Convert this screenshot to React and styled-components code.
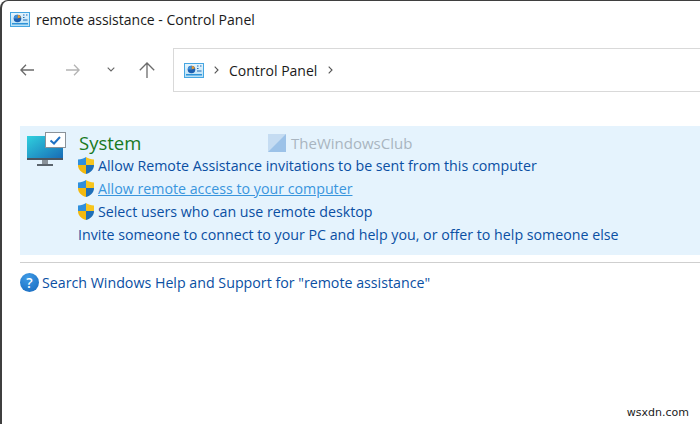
import React from 'react';
import styled, { createGlobalStyle } from 'styled-components';

const GlobalStyle = createGlobalStyle`
	html, body {
		margin: 0;
		padding: 0;
		background: #fff;
	}
	body {
		font-family: 'Open Sans', 'Noto Sans', sans-serif;
	}
`;

const CpIcon = ({ id }) => (
	<svg width="20" height="15" viewBox="0 0 20 15">
		<defs>
			<linearGradient id={id} x1="0" y1="0" x2="0" y2="1">
				<stop offset="0" stopColor="#e6f5fd" />
				<stop offset="1" stopColor="#b6dff6" />
			</linearGradient>
		</defs>
		<rect x="0.5" y="0.5" width="19" height="14" fill={`url(#${id})`} stroke="#45a6e2" />
		<circle cx="7.5" cy="6.5" r="3.8" fill="#1d5fb0" />
		<path d="M7.5 6.5V2.7a3.8 3.8 0 0 1 3.6 2.6z" fill="#e89a32" />
		<path d="M3.8 6.5a3.8 3.8 0 0 1 3.7-3.8v3.8z" fill="#3f8fd8" />
		<path d="M13 3h1.5M16 3h1.5M13 5.5h1.5M13 8h4.5" stroke="#1f69b5" strokeWidth="1.2" />
		<rect x="2" y="11" width="16" height="1.5" fill="#2f93d8" />
	</svg>
);

const Shield = () => (
	<ShieldSvg width="18" height="19" viewBox="0 0 18 19">
		<path d="M9 1C7 2.6 4 3.4 1 3.4V9h8z" fill="#2f8fdc" />
		<path d="M9 1c2 1.6 5 2.4 8 2.4V9H9z" fill="#f7c51e" />
		<path d="M1 9c0 4.6 3.4 7.6 8 9V9z" fill="#f2b90f" />
		<path d="M17 9c0 4.6-3.4 7.6-8 9V9z" fill="#1f6fb8" />
	</ShieldSvg>
);

const ArrowLeft = ({ color }) => (
	<svg width="14" height="12" viewBox="0 0 14 12" fill="none" stroke={color} strokeWidth="1.3">
		<path d="M14 6H1M6 .7L.9 6 6 11.3" />
	</svg>
);

const ArrowRight = ({ color }) => (
	<svg width="14" height="12" viewBox="0 0 14 12" fill="none" stroke={color} strokeWidth="1.3">
		<path d="M0 6h13M8 .7L13.1 6 8 11.3" />
	</svg>
);

const ArrowUp = ({ color }) => (
	<svg width="16" height="16" viewBox="0 0 16 16" fill="none" stroke={color} strokeWidth="1.3">
		<path d="M8 16V1M.8 8.2L8 1l7.2 7.2" />
	</svg>
);

const Chevron = () => (
	<svg width="5" height="8" viewBox="0 0 5 8" fill="none" stroke="#555" strokeWidth="1.1">
		<path d="M.7.7L4 4 .7 7.3" />
	</svg>
);

const App = () => {
	return (
		<>
			<GlobalStyle />
			<Window>
				<TitleBar>
					<CpIcon id="cpTitle" />
					<TitleText>remote assistance - Control Panel</TitleText>
				</TitleBar>
				<NavRow>
					<NavButtons>
						<NavSlot $width={46}>
							<ArrowLeft color="#6b6b6b" />
						</NavSlot>
						<NavSlot $width={41}>
							<ArrowRight color="#b4b4b4" />
						</NavSlot>
						<NavSlot $width={32}>
							<svg width="8" height="5" viewBox="0 0 8 5" fill="none" stroke="#666" strokeWidth="1.1">
								<path d="M.7.7L4 4 7.3.7" />
							</svg>
						</NavSlot>
						<ArrowUp color="#6b6b6b" />
					</NavButtons>
					<AddressBar>
						<CpIcon id="cpAddress" />
						<Chevron />
						<Crumb>Control Panel</Crumb>
						<Chevron />
					</AddressBar>
				</NavRow>
				<Results>
					<ResultPanel>
						<MonitorIcon width="40" height="36" viewBox="0 0 40 36">
							<defs>
								<linearGradient id="screen" x1="0" y1="0" x2="1" y2="1">
									<stop offset="0" stopColor="#2fd0de" />
									<stop offset="1" stopColor="#1767b4" />
								</linearGradient>
							</defs>
							<rect x="0" y="4" width="36" height="24" fill="url(#screen)" />
							<rect x="0" y="26" width="36" height="2" fill="#4b5560" />
							<rect x="15" y="28" width="6" height="4" fill="#8a9299" />
							<rect x="10" y="32" width="16" height="2" fill="#5b646c" />
							<rect x="18.5" y="0.5" width="20" height="15" fill="#fff" stroke="#8a9299" />
							<path d="M23.5 8.5l3.5 3 6-6.5" fill="none" stroke="#1f72c4" strokeWidth="2" />
						</MonitorIcon>
						<ResultBody>
							<ResultTitle>System</ResultTitle>
							<TaskRow>
								<Shield />
								<TaskLink>Allow Remote Assistance invitations to be sent from this computer</TaskLink>
							</TaskRow>
							<TaskRow>
								<Shield />
								<TaskLink $active>Allow remote access to your computer</TaskLink>
							</TaskRow>
							<TaskRow>
								<Shield />
								<TaskLink>Select users who can use remote desktop</TaskLink>
							</TaskRow>
							<TaskRow>
								<TaskLink>Invite someone to connect to your PC and help you, or offer to help someone else</TaskLink>
							</TaskRow>
						</ResultBody>
						<Watermark>
							<svg width="18" height="18" viewBox="0 0 18 18">
								<rect width="18" height="18" fill="#c5dcf2" />
								<path d="M0 18L18 0v18z" fill="#9cc2e8" />
							</svg>
							<WatermarkText>TheWindowsClub</WatermarkText>
						</Watermark>
					</ResultPanel>
					<Divider />
					<HelpRow>
						<HelpIcon>?</HelpIcon>
						<TaskLink>Search Windows Help and Support for "remote assistance"</TaskLink>
					</HelpRow>
				</Results>
				<Credit>wsxdn.com</Credit>
			</Window>
		</>
	);
};

export default App;

const Window = styled.div`
	position: relative;
	box-sizing: border-box;
	width: 700px;
	height: 424px;
	overflow: hidden;
	background: #fff;
	border-left: 2px solid #3f3f3f;
	border-top: 1px solid #3f3f3f;
	border-top-left-radius: 8px;
`;
const TitleBar = styled.div`
	display: flex;
	align-items: center;
	gap: 6px;
	height: 36px;
	padding-left: 8px;
`;
const TitleText = styled.div`
	font-size: 14px;
	color: #1a1a1a;
`;
const NavRow = styled.div`
	display: flex;
	align-items: center;
	height: 44px;
	margin-top: 11px;
`;
const NavButtons = styled.div`
	display: flex;
	align-items: center;
	width: 171px;
	padding-left: 18px;
	box-sizing: border-box;
	margin-top: -1px;
`;
const NavSlot = styled.div`
	display: flex;
	align-items: center;
	flex: none;
	width: ${({ $width }) => $width}px;
`;
const AddressBar = styled.div`
	display: flex;
	align-items: center;
	flex: 1;
	height: 44px;
	box-sizing: border-box;
	padding-left: 10px;
	gap: 10px;
	border: 1px solid #d9d9d9;
	border-right: none;
`;
const Crumb = styled.div`
	font-size: 14px;
	color: #1a1a1a;
	margin-right: 1px;
`;
const Results = styled.div`
	padding: 34px 0 0 18px;
`;
const ResultPanel = styled.div`
	position: relative;
	display: flex;
	height: 129px;
	padding: 6px 0 0 7px;
	box-sizing: border-box;
	background: #e5f3fd;
`;
const MonitorIcon = styled.svg`
	flex: none;
	margin-right: 11px;
`;
const ResultBody = styled.div`
	display: flex;
	flex-direction: column;
`;
const ResultTitle = styled.div`
	font-size: 18.5px;
	line-height: 21.5px;
	color: #17791f;
	margin-left: 1px;
`;
const TaskRow = styled.div`
	display: flex;
	align-items: center;
	height: 23px;
`;
const ShieldSvg = styled.svg`
	flex: none;
	margin: 0 3px 0 -1px;
`;
const TaskLink = styled.span`
	font-size: 14.22px;
	color: ${({ $active }) => ($active ? '#3a96dd' : '#0a4fa3')};
	text-decoration: ${({ $active }) => ($active ? 'underline' : 'none')};
	white-space: nowrap;
`;
const Watermark = styled.div`
	position: absolute;
	left: 248px;
	top: 7px;
	display: flex;
	align-items: center;
	gap: 5px;
`;
const WatermarkText = styled.span`
	font-size: 15px;
	color: #a9b5c0;
`;
const Divider = styled.div`
	height: 1px;
	margin-top: 7px;
	background: #cfcfcf;
`;
const HelpRow = styled.div`
	display: flex;
	align-items: center;
	gap: 3px;
	margin-top: 10px;
`;
const HelpIcon = styled.div`
	width: 19px;
	height: 19px;
	border-radius: 50%;
	background: radial-gradient(circle at 40% 25%, #3f9be6, #1668bd);
	color: #fff;
	font-size: 14px;
	font-weight: 600;
	line-height: 19px;
	text-align: center;
`;
const Credit = styled.div`
	position: absolute;
	right: 11px;
	bottom: 5px;
	font-family: 'DejaVu Sans', sans-serif;
	font-size: 11px;
	color: #222;
`;
